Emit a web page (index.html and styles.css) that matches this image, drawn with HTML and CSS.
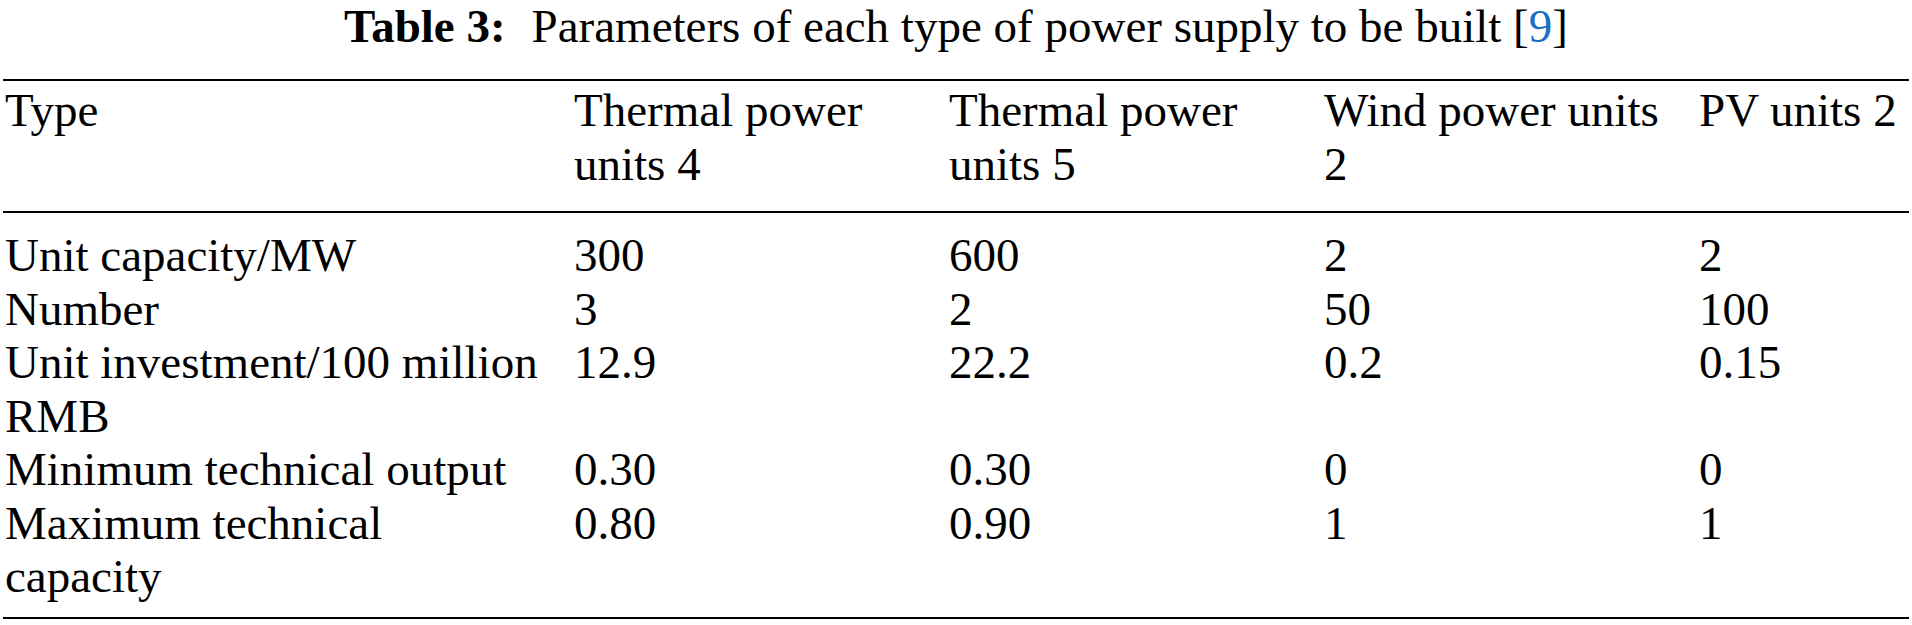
FILE: index.html
```html
<!DOCTYPE html>
<html lang="en">
<head>
    <meta charset="UTF-8">
    <meta name="viewport" content="width=device-width, initial-scale=1.0">
    <title>Table 3: Parameters of each type of power supply to be built</title>
    <link rel="stylesheet" href="styles.css">
</head>
<body>

    <!-- Table 3: power supply parameters -->
    <table class="data-table">
        <caption><strong>Table 3:</strong><span class="caption-text">Parameters of each type of power supply to be built [<a href="#ref9" class="ref">9</a>]</span></caption>
        <colgroup>
            <col class="col-label">
            <col class="col-value">
            <col class="col-value">
            <col class="col-value">
            <col class="col-last">
        </colgroup>
        <thead>
            <tr>
                <th>Type</th>
                <th>Thermal power units 4</th>
                <th>Thermal power units 5</th>
                <th>Wind power units 2</th>
                <th>PV units 2</th>
            </tr>
        </thead>
        <tbody>
            <tr>
                <td>Unit capacity/MW</td>
                <td>300</td>
                <td>600</td>
                <td>2</td>
                <td>2</td>
            </tr>
            <tr>
                <td>Number</td>
                <td>3</td>
                <td>2</td>
                <td>50</td>
                <td>100</td>
            </tr>
            <tr>
                <td>Unit investment/100 million RMB</td>
                <td>12.9</td>
                <td>22.2</td>
                <td>0.2</td>
                <td>0.15</td>
            </tr>
            <tr>
                <td>Minimum technical output</td>
                <td>0.30</td>
                <td>0.30</td>
                <td>0</td>
                <td>0</td>
            </tr>
            <tr>
                <td>Maximum technical capacity</td>
                <td>0.80</td>
                <td>0.90</td>
                <td>1</td>
                <td>1</td>
            </tr>
        </tbody>
    </table>

</body>
</html>
```

FILE: styles.css
```css
body {
    margin: 0;
    background: #fff;
    color: #000;
    font-family: "Liberation Serif", "Times New Roman", serif;
    font-size: 47px;
}
.data-table {
    border-collapse: collapse;
    table-layout: fixed;
    width: 1906px;
    margin-left: 3px;
    border-top: 2px solid #000;
    border-bottom: 2px solid #000;
}
.data-table caption {
    line-height: 52px;
    padding-bottom: 27px;
    text-align: center;
    white-space: nowrap;
}
.caption-text {
    margin-left: 26px;
}
.ref {
    color: #1a6fc4;
    text-decoration: none;
}
.col-label { width: 569px; }
.col-value { width: 375px; }
.col-last { width: 212px; }
.data-table th,
.data-table td {
    padding: 0 26px 0 2px;
    line-height: 53.5px;
    text-align: left;
    vertical-align: top;
    font-weight: normal;
}
.data-table th:last-child,
.data-table td:last-child {
    padding-right: 0;
}
.data-table thead th {
    padding-top: 3px;
    padding-bottom: 20px;
    border-bottom: 2px solid #000;
}
.data-table tbody tr:first-child td {
    padding-top: 16px;
}
.data-table tbody tr:last-child td {
    padding-bottom: 13px;
}
```
